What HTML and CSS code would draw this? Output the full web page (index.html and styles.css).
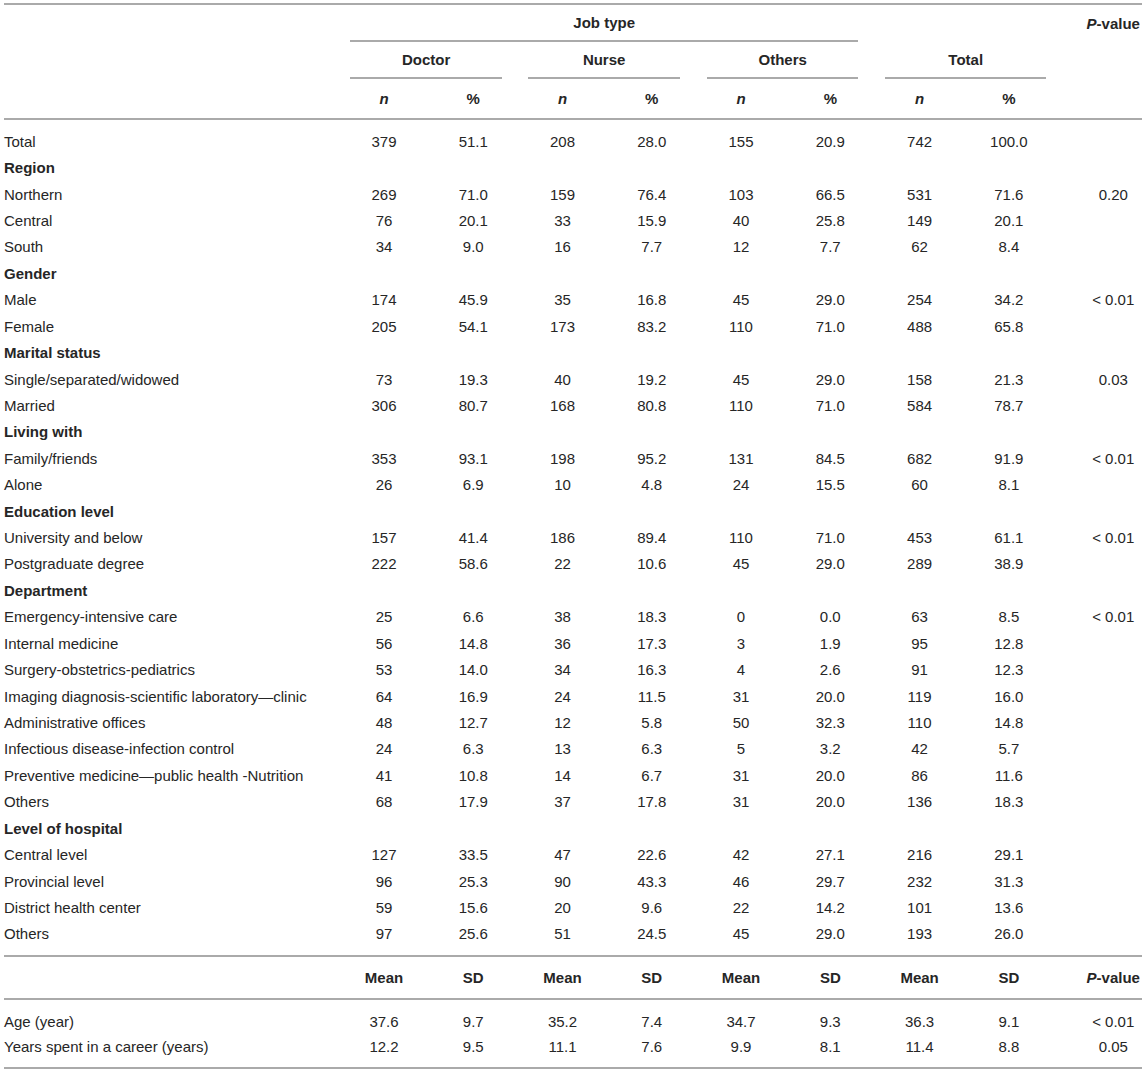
FILE: index.html
```html
<!DOCTYPE html>
<html lang="en">
<head>
<meta charset="utf-8">
<title>Table</title>
<link rel="stylesheet" href="styles.css">
</head>
<body>
<table class="tbl">
  <colgroup>
    <col class="c-lab">
    <col class="c-num"><col class="c-num"><col class="c-num"><col class="c-num">
    <col class="c-num"><col class="c-num"><col class="c-num"><col class="c-num">
    <col class="c-p">
  </colgroup>
  <thead>
    <tr class="hr1">
      <td></td>
      <th colspan="6"><div class="ul ul-job">Job type</div></th>
      <td colspan="2"></td>
      <th class="pcol"><span class="it">P</span>-value</th>
    </tr>
    <tr class="hr2">
      <td></td>
      <th colspan="2"><div class="ul ul-doc">Doctor</div></th>
      <th colspan="2"><div class="ul ul-nur">Nurse</div></th>
      <th colspan="2"><div class="ul ul-oth">Others</div></th>
      <th colspan="2"><div class="ul ul-tot">Total</div></th>
      <td></td>
    </tr>
    <tr class="hr3">
      <td></td>
      <th class="it">n</th><th>%</th>
      <th class="it">n</th><th>%</th>
      <th class="it">n</th><th>%</th>
      <th class="it">n</th><th>%</th>
      <td></td>
    </tr>
  </thead>
  <tbody>
    <tr class="r first"><td class="lab">Total</td><td>379</td><td>51.1</td><td>208</td><td>28.0</td><td>155</td><td>20.9</td><td>742</td><td>100.0</td><td class="pcol"></td></tr>
    <tr class="r"><td class="lab b" colspan="10">Region</td></tr>
    <tr class="r"><td class="lab">Northern</td><td>269</td><td>71.0</td><td>159</td><td>76.4</td><td>103</td><td>66.5</td><td>531</td><td>71.6</td><td class="pcol">0.20</td></tr>
    <tr class="r"><td class="lab">Central</td><td>76</td><td>20.1</td><td>33</td><td>15.9</td><td>40</td><td>25.8</td><td>149</td><td>20.1</td><td class="pcol"></td></tr>
    <tr class="r"><td class="lab">South</td><td>34</td><td>9.0</td><td>16</td><td>7.7</td><td>12</td><td>7.7</td><td>62</td><td>8.4</td><td class="pcol"></td></tr>
    <tr class="r"><td class="lab b" colspan="10">Gender</td></tr>
    <tr class="r"><td class="lab">Male</td><td>174</td><td>45.9</td><td>35</td><td>16.8</td><td>45</td><td>29.0</td><td>254</td><td>34.2</td><td class="pcol">&lt; 0.01</td></tr>
    <tr class="r"><td class="lab">Female</td><td>205</td><td>54.1</td><td>173</td><td>83.2</td><td>110</td><td>71.0</td><td>488</td><td>65.8</td><td class="pcol"></td></tr>
    <tr class="r"><td class="lab b" colspan="10">Marital status</td></tr>
    <tr class="r"><td class="lab">Single/separated/widowed</td><td>73</td><td>19.3</td><td>40</td><td>19.2</td><td>45</td><td>29.0</td><td>158</td><td>21.3</td><td class="pcol">0.03</td></tr>
    <tr class="r"><td class="lab">Married</td><td>306</td><td>80.7</td><td>168</td><td>80.8</td><td>110</td><td>71.0</td><td>584</td><td>78.7</td><td class="pcol"></td></tr>
    <tr class="r"><td class="lab b" colspan="10">Living with</td></tr>
    <tr class="r"><td class="lab">Family/friends</td><td>353</td><td>93.1</td><td>198</td><td>95.2</td><td>131</td><td>84.5</td><td>682</td><td>91.9</td><td class="pcol">&lt; 0.01</td></tr>
    <tr class="r"><td class="lab">Alone</td><td>26</td><td>6.9</td><td>10</td><td>4.8</td><td>24</td><td>15.5</td><td>60</td><td>8.1</td><td class="pcol"></td></tr>
    <tr class="r"><td class="lab b" colspan="10">Education level</td></tr>
    <tr class="r"><td class="lab">University and below</td><td>157</td><td>41.4</td><td>186</td><td>89.4</td><td>110</td><td>71.0</td><td>453</td><td>61.1</td><td class="pcol">&lt; 0.01</td></tr>
    <tr class="r"><td class="lab">Postgraduate degree</td><td>222</td><td>58.6</td><td>22</td><td>10.6</td><td>45</td><td>29.0</td><td>289</td><td>38.9</td><td class="pcol"></td></tr>
    <tr class="r"><td class="lab b" colspan="10">Department</td></tr>
    <tr class="r"><td class="lab">Emergency-intensive care</td><td>25</td><td>6.6</td><td>38</td><td>18.3</td><td>0</td><td>0.0</td><td>63</td><td>8.5</td><td class="pcol">&lt; 0.01</td></tr>
    <tr class="r"><td class="lab">Internal medicine</td><td>56</td><td>14.8</td><td>36</td><td>17.3</td><td>3</td><td>1.9</td><td>95</td><td>12.8</td><td class="pcol"></td></tr>
    <tr class="r"><td class="lab">Surgery-obstetrics-pediatrics</td><td>53</td><td>14.0</td><td>34</td><td>16.3</td><td>4</td><td>2.6</td><td>91</td><td>12.3</td><td class="pcol"></td></tr>
    <tr class="r"><td class="lab">Imaging diagnosis-scientific laboratory—clinic</td><td>64</td><td>16.9</td><td>24</td><td>11.5</td><td>31</td><td>20.0</td><td>119</td><td>16.0</td><td class="pcol"></td></tr>
    <tr class="r"><td class="lab">Administrative offices</td><td>48</td><td>12.7</td><td>12</td><td>5.8</td><td>50</td><td>32.3</td><td>110</td><td>14.8</td><td class="pcol"></td></tr>
    <tr class="r"><td class="lab">Infectious disease-infection control</td><td>24</td><td>6.3</td><td>13</td><td>6.3</td><td>5</td><td>3.2</td><td>42</td><td>5.7</td><td class="pcol"></td></tr>
    <tr class="r"><td class="lab">Preventive medicine—public health -Nutrition</td><td>41</td><td>10.8</td><td>14</td><td>6.7</td><td>31</td><td>20.0</td><td>86</td><td>11.6</td><td class="pcol"></td></tr>
    <tr class="r"><td class="lab">Others</td><td>68</td><td>17.9</td><td>37</td><td>17.8</td><td>31</td><td>20.0</td><td>136</td><td>18.3</td><td class="pcol"></td></tr>
    <tr class="r"><td class="lab b" colspan="10">Level of hospital</td></tr>
    <tr class="r"><td class="lab">Central level</td><td>127</td><td>33.5</td><td>47</td><td>22.6</td><td>42</td><td>27.1</td><td>216</td><td>29.1</td><td class="pcol"></td></tr>
    <tr class="r"><td class="lab">Provincial level</td><td>96</td><td>25.3</td><td>90</td><td>43.3</td><td>46</td><td>29.7</td><td>232</td><td>31.3</td><td class="pcol"></td></tr>
    <tr class="r"><td class="lab">District health center</td><td>59</td><td>15.6</td><td>20</td><td>9.6</td><td>22</td><td>14.2</td><td>101</td><td>13.6</td><td class="pcol"></td></tr>
    <tr class="r last"><td class="lab">Others</td><td>97</td><td>25.6</td><td>51</td><td>24.5</td><td>45</td><td>29.0</td><td>193</td><td>26.0</td><td class="pcol"></td></tr>
    <tr class="mr">
      <td></td>
      <th>Mean</th><th>SD</th><th>Mean</th><th>SD</th><th>Mean</th><th>SD</th><th>Mean</th><th>SD</th>
      <th class="pcol"><span class="it">P</span>-value</th>
    </tr>
    <tr class="r first"><td class="lab">Age (year)</td><td>37.6</td><td>9.7</td><td>35.2</td><td>7.4</td><td>34.7</td><td>9.3</td><td>36.3</td><td>9.1</td><td class="pcol">&lt; 0.01</td></tr>
    <tr class="r last end"><td class="lab">Years spent in a career (years)</td><td>12.2</td><td>9.5</td><td>11.1</td><td>7.6</td><td>9.9</td><td>8.1</td><td>11.4</td><td>8.8</td><td class="pcol">0.05</td></tr>
  </tbody>
</table>
</body>
</html>
```

FILE: styles.css
```css
html, body {
  margin: 0;
  padding: 0;
  background: #ffffff;
}

body {
  font-family: "Liberation Sans", Arial, Helvetica, sans-serif;
  font-size: 15px;
  color: #262626;
}

.tbl {
  border-collapse: separate;
  border-spacing: 0;
  table-layout: fixed;
  width: 1138px;
  margin: 3px 0 0 4px;
  border-top: 2px solid #aaaaaa;
}

.c-lab { width: 335.4px; }
.c-num { width: 89.25px; }
.c-p { width: 88.6px; }

.tbl td,
.tbl th {
  padding: 0;
  text-align: center;
  vertical-align: middle;
  line-height: 17px;
  font-weight: normal;
  white-space: nowrap;
}

.tbl th {
  font-weight: bold;
}

.it {
  font-style: italic;
}

.tbl .lab {
  text-align: left;
}

.tbl .b {
  font-weight: bold;
}

.tbl .pcol {
  padding-left: 31px;
}

/* header underline blocks */
.ul {
  height: 35px;
  display: flex;
  align-items: center;
  justify-content: center;
  border-bottom: 2px solid #aaaaaa;
}

.ul-job { margin: 0 17px 0 11px; }
.ul-doc { margin: 0 16px 0 11px; }
.ul-nur { margin: 0 16px 0 10px; }
.ul-oth { margin: 0 17px 0 11px; }
.ul-tot { margin: 0 7px 0 10px; }

.hr1 { height: 37px; }
.hr2 { height: 37px; }

.hr3 td,
.hr3 th {
  height: 39px;
  border-bottom: 2px solid #aaaaaa;
}

.r { height: 26.43px; }

.r.first { height: 34.43px; }
.r.first td { padding-top: 8px; }

.r.last { height: 34.43px; }
.r.last td { padding-bottom: 8px; }

.r.first.last { height: 42.43px; }

.mr { height: 45px; }
.mr td,
.mr th {
  border-top: 2px solid #aaaaaa;
  border-bottom: 2px solid #aaaaaa;
}

.r.end td {
  border-bottom: 2px solid #aaaaaa;
}
```
